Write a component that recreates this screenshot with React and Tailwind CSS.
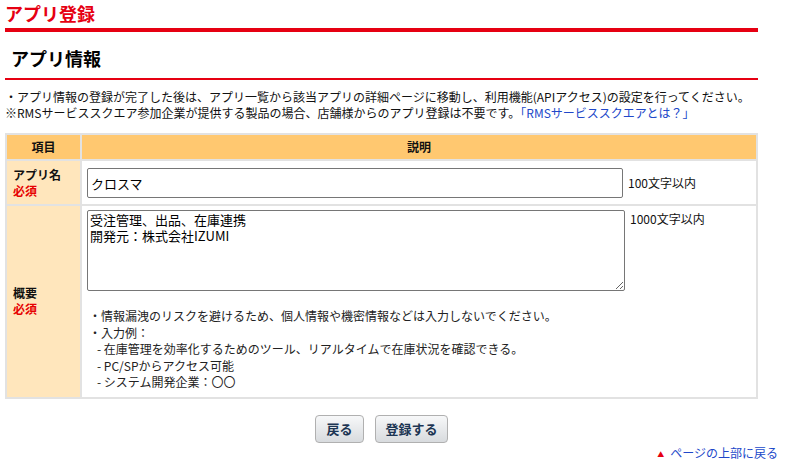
import { useState } from "react";

const FONT = { fontFamily: '"Noto Sans CJK JP", "Noto Sans", sans-serif' };

export default function App() {
  const [name, setName] = useState("クロスマ");
  const [summary, setSummary] = useState("受注管理、出品、在庫連携\n開発元：株式会社IZUMI");

  return (
    <div className="bg-white text-[12px] leading-[16px] text-[#111]" style={FONT}>
      <div className="ml-[5px] w-[753px]">
        <h1 className="pt-[1px] text-[18px] leading-[24px] font-bold text-[#e60012]">
          アプリ登録
        </h1>
        <div className="mt-[3px] h-[4px] bg-[#e60012]"></div>

        <h2 className="mt-[14px] pl-[6px] text-[18px] leading-[24px] font-bold text-black">
          アプリ情報
        </h2>
        <div className="mt-[8px] h-[2px] bg-[#e60012]"></div>

        <div className="mt-[9px]">
          <p>・アプリ情報の登録が完了した後は、アプリ一覧から該当アプリの詳細ページに移動し、利用機能(APIアクセス)の設定を行ってください。</p>
          <p>
            ※RMSサービススクエア参加企業が提供する製品の場合、店舗様からのアプリ登録は不要です。
            <a href="#" className="text-[#2148c9]">「RMSサービススクエアとは？」</a>
          </p>
        </div>

        <table className="mt-[12px] w-full border-collapse border border-[#e2e2e2]">
          <thead>
            <tr className="bg-[#ffc870] font-bold">
              <th className="w-[75px] h-[26px] border-2 border-[#e2e2e2] text-center">項目</th>
              <th className="border-2 border-[#e2e2e2] text-center">説明</th>
            </tr>
          </thead>
          <tbody>
            <tr>
              <td className="bg-[#ffe6bc] border-2 border-[#e2e2e2] px-[6px] align-middle font-bold">
                <div>アプリ名</div>
                <div className="text-[#e60000]">必須</div>
              </td>
              <td className="border-2 border-[#e2e2e2] px-[5px] pt-[7px] pb-[6px]">
                <div className="flex items-center gap-[5px]">
                  <input
                    value={name}
                    onChange={(e) => setName(e.target.value)}
                    className="w-[536px] h-[30px] border border-[#767676] rounded-[2px] px-[3px] text-[13px] text-black outline-none"
                    style={FONT}
                  />
                  <span>100文字以内</span>
                </div>
              </td>
            </tr>
            <tr>
              <td className="bg-[#ffe6bc] border-2 border-[#e2e2e2] px-[6px] align-middle font-bold">
                <div>概要</div>
                <div className="text-[#e60000]">必須</div>
              </td>
              <td className="border-2 border-[#e2e2e2] px-[5px] pt-[4px] pb-[6px]">
                <div className="flex items-start gap-[5px]">
                  <textarea
                    value={summary}
                    onChange={(e) => setSummary(e.target.value)}
                    className="w-[538px] h-[81px] border border-[#767676] rounded-[2px] px-[2px] py-[1px] text-[13px] leading-[16px] text-black outline-none block"
                    style={FONT}
                  />
                  <span className="pt-[1px]">1000文字以内</span>
                </div>
                <div className="mt-[17px] pl-[2px] leading-[16.5px] text-[#222]">
                  <p>・情報漏洩のリスクを避けるため、個人情報や機密情報などは入力しないでください。</p>
                  <p>・入力例：</p>
                  <p className="pl-[8px]">- 在庫管理を効率化するためのツール、リアルタイムで在庫状況を確認できる。</p>
                  <p className="pl-[8px]">- PC/SPからアクセス可能</p>
                  <p className="pl-[8px]">- システム開発企業：〇〇</p>
                </div>
              </td>
            </tr>
          </tbody>
        </table>

        <div className="mt-[16px] flex justify-center gap-[11px]">
          <button className="w-[49px] h-[28px] rounded-[4px] border border-[#b0b0b0] bg-gradient-to-b from-[#f7f8f9] to-[#d8dbde] text-[13px] font-bold text-[#1c3553]">
            戻る
          </button>
          <button className="w-[73px] h-[28px] rounded-[4px] border border-[#b0b0b0] bg-gradient-to-b from-[#f7f8f9] to-[#d8dbde] text-[13px] font-bold text-[#1c3553]">
            登録する
          </button>
        </div>
      </div>

      <div className="mt-[1px] mr-[10px] flex justify-end items-center gap-[6px]">
        <span className="text-[#e60012] text-[7px] leading-[16px] pt-[2px]">▲</span>
        <a href="#" className="text-[#2148c9]">ページの上部に戻る</a>
      </div>
    </div>
  );
}
